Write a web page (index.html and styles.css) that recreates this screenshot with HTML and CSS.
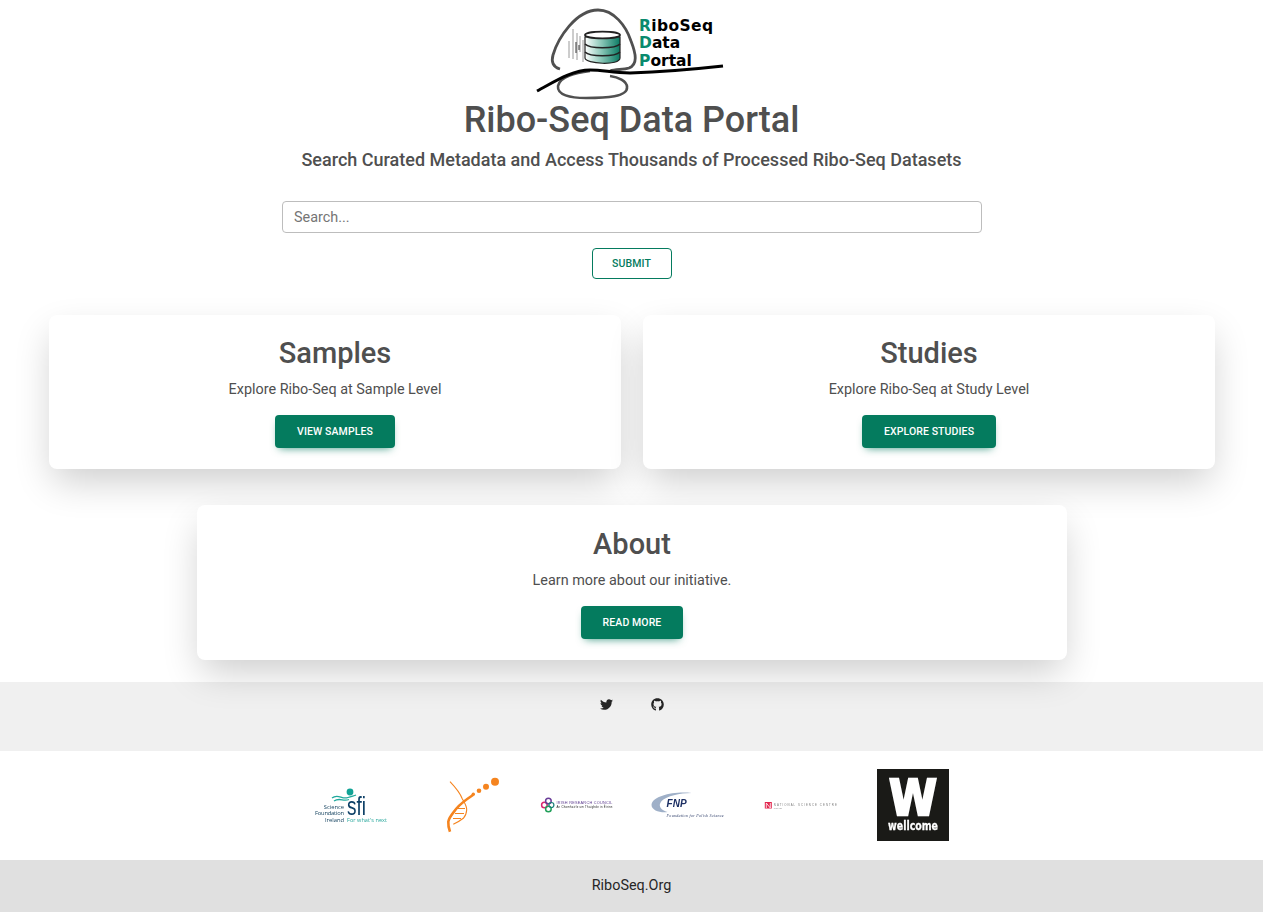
FILE: index.html
```html
<!DOCTYPE html>
<html lang="en">
<head>
<meta charset="utf-8">
<title>Ribo-Seq Data Portal</title>
<link rel="stylesheet" href="styles.css">
</head>
<body>
<header class="hero">
  <svg class="site-logo" width="220" height="100" viewBox="0 0 220 100" role="img" aria-label="RiboSeq Data Portal">
    <defs>
      <linearGradient id="cyl" x1="0" x2="1" y1="0" y2="0">
        <stop offset="0" stop-color="#ffffff"/>
        <stop offset="0.45" stop-color="#8fc9ba"/>
        <stop offset="1" stop-color="#0a7a63"/>
      </linearGradient>
    </defs>
    <path d="M40 69C33 67 31 62 33 55C38 38 56 10 78 10C94 10 106 26 111 41C116 54 118 64 109 68C103 70 96 69 90 71" fill="none" stroke="#505050" stroke-width="2.800"/>
    <path d="M70 71C56 73 40 76 38 86C37 95 50 98 66 98C86 98 108 97 107 87C107 81 98 77 90 76" fill="none" stroke="#505050" stroke-width="2.600"/>
    <path d="M17 91C34 82 52 70 70 70C84 70 92 73 110 73C140 72 176 69 203 66" fill="none" stroke="#000" stroke-width="3"/>
    <path d="M65 37V58C65 64 100 66 100 58V37Z" fill="url(#cyl)" stroke="#222" stroke-width="1.200"/>
    <ellipse cx="82.500" cy="35" rx="17.500" ry="3.400" fill="#fff" stroke="#222" stroke-width="1.800"/>
    <path d="M65 44C70 49 95 49 100 44M65 52C70 57 95 57 100 52" fill="none" stroke="#222" stroke-width="1.600"/>
    <path d="M53 29V59M57 33V60M60 36V52M49 41V58M63 40V62" fill="none" stroke="#9a9a9a" stroke-width="1"/>
    <path d="M56 42V53M59 45V50" fill="none" stroke="#333" stroke-width="1"/>
    <text class="lg-t" x="119" y="31" textLength="74"><tspan class="lg-c">R</tspan>iboSeq</text>
    <text class="lg-t" x="119" y="48"><tspan class="lg-c">D</tspan>ata</text>
    <text class="lg-t" x="119" y="66"><tspan class="lg-c">P</tspan>ortal</text>
  </svg>
  <h1 class="title">Ribo-Seq Data Portal</h1>
  <p class="subtitle">Search Curated Metadata and Access Thousands of Processed Ribo-Seq Datasets</p>
  <form class="search">
    <input class="search-input" type="text" placeholder="Search...">
    <button class="btn btn-outline" type="button">Submit</button>
  </form>
</header>

<main class="cards">
  <section class="card card-half">
    <h2 class="card-title">Samples</h2>
    <p class="card-text">Explore Ribo-Seq at Sample Level</p>
    <a class="btn btn-solid btn-samples" href="#">View Samples</a>
  </section>
  <section class="card card-half">
    <h2 class="card-title">Studies</h2>
    <p class="card-text">Explore Ribo-Seq at Study Level</p>
    <a class="btn btn-solid btn-studies" href="#">Explore Studies</a>
  </section>
  <section class="card card-wide">
    <h2 class="card-title">About</h2>
    <p class="card-text">Learn more about our initiative.</p>
    <a class="btn btn-solid btn-about" href="#">Read More</a>
  </section>
</main>

<section class="social">
  <a class="social-link" href="#" aria-label="Twitter">
    <svg width="13" height="13" viewBox="0 0 512 512"><path fill="currentColor" d="M459.37 151.716c.325 4.548.325 9.097.325 13.645 0 138.72-105.583 298.558-298.558 298.558-59.452 0-114.68-17.219-161.137-47.106 8.447.974 16.568 1.299 25.34 1.299 49.055 0 94.213-16.568 130.274-44.832-46.132-.975-84.792-31.188-98.112-72.772 6.498.974 12.995 1.624 19.818 1.624 9.421 0 18.843-1.3 27.614-3.573-48.081-9.747-84.143-51.98-84.143-102.985v-1.299c13.969 7.797 30.214 12.67 47.431 13.319-28.264-18.843-46.781-51.005-46.781-87.391 0-19.492 5.197-37.36 14.294-52.954 51.655 63.675 129.3 105.258 216.365 109.807-1.624-7.797-2.599-15.918-2.599-24.04 0-57.828 46.782-104.934 104.934-104.934 30.213 0 57.502 12.67 76.67 33.137 23.715-4.548 46.456-13.32 66.599-25.34-7.798 24.366-24.366 44.833-46.132 57.827 21.117-2.273 41.584-8.122 60.426-16.243-14.292 20.791-32.161 39.308-52.628 54.253z"/></svg>
  </a>
  <a class="social-link" href="#" aria-label="GitHub">
    <svg width="13" height="13" viewBox="0 0 496 512"><path fill="currentColor" d="M244.8 8C106.1 8 0 113.3 0 252c0 110.9 69.8 205.8 169.5 239.2 12.8 2.3 17.3-5.6 17.3-12.1 0-6.2-.3-40.4-.3-61.4 0 0-70 15-84.7-29.8 0 0-11.4-29.1-27.8-36.6 0 0-22.9-15.7 1.6-15.4 0 0 24.9 2 38.6 25.8 21.9 38.6 58.6 27.5 72.9 20.9 2.3-16 8.8-27.1 16-33.7-55.9-6.2-112.3-14.3-112.3-110.5 0-27.5 7.6-41.3 23.6-58.9-2.6-6.5-11.1-33.3 2.6-67.9 20.9-6.5 69 27 69 27 20-5.6 41.5-8.5 62.8-8.5s42.8 2.9 62.8 8.5c0 0 48.1-33.6 69-27 13.7 34.7 5.2 61.4 2.6 67.9 16 17.7 25.8 31.5 25.8 58.9 0 96.5-58.9 104.2-114.8 110.5 9.2 7.9 17 22.9 17 46.4 0 33.7-.3 75.4-.3 83.6 0 6.5 4.6 14.4 17.3 12.1C428.2 457.8 496 362.9 496 252 496 113.3 383.5 8 244.8 8z"/></svg>
  </a>
</section>

<section class="partners">
  <svg class="partner" viewBox="-1 0 72 72" width="72" height="72" role="img" aria-label="Science Foundation Ireland">
    <circle cx="36" cy="23" r="3.400" fill="#12a396"/>
    <path d="M18 29C24 24 28 31 34 28.500C38 27 40 27 42 26M20 32C26 28 29 33 35 30.500" fill="none" stroke="#1fa89c" stroke-width="1.300"/>
    <text class="sfi-big" x="33" y="46" textLength="19" lengthAdjust="spacingAndGlyphs">sfi</text>
    <text class="sfi-small" x="30" y="40" text-anchor="end">Science</text>
    <text class="sfi-small" x="30" y="46" text-anchor="end" textLength="29">Foundation</text>
    <text class="sfi-small" x="30" y="52.500" text-anchor="end">Ireland</text>
    <text class="sfi-next" x="33" y="52.500" textLength="40">For what's next</text>
  </svg>
  <svg class="partner" viewBox="0 0 72 72" width="72" height="72" role="img" aria-label="Ribosome profiling">
    <circle cx="69" cy="12.700" r="4" fill="#f5841f"/>
    <circle cx="60" cy="17.700" r="3" fill="#f5841f"/>
    <circle cx="53" cy="21.700" r="2.300" fill="#f5841f"/>
    <circle cx="47.300" cy="25.300" r="1.700" fill="#f5841f"/>
    <path d="M24 12.700C29 18 34 24 36 29.300C38 33 41 37 40.700 41C40.500 45 38.500 48 37.300 49.300C34 52 30 54 27.300 55.300" fill="none" stroke="#f5841f" stroke-width="1.100"/>
    <path d="M47 26C41 30 35 34 30.700 39.300C27 44 23 48 22.300 52.700C22 57 23 60 24 62.700" fill="none" stroke="#f5841f" stroke-width="2.600"/>
    <path d="M31 39.500H39M29 44.500H38M27 49.500H35" stroke="#f5841f" stroke-width="1"/>
  </svg>
  <svg class="partner" viewBox="-1.400 0 72 72" width="72" height="72" role="img" aria-label="Irish Research Council">
    <circle cx="4" cy="36" r="2.800" fill="none" stroke="#d9266e" stroke-width="1.500"/>
    <circle cx="8" cy="32" r="2.800" fill="none" stroke="#6a3d98" stroke-width="1.500"/>
    <circle cx="8" cy="40" r="2.800" fill="none" stroke="#22a05a" stroke-width="1.500"/>
    <circle cx="11" cy="36" r="2.500" fill="none" stroke="#1b7f7a" stroke-width="1.200"/>
    <text class="irc-a" x="16" y="35" textLength="56">IRISH RESEARCH COUNCIL</text>
    <text class="irc-b" x="16" y="39" textLength="56">An Chomhairle um Thaighde in Éirinn</text>
  </svg>
  <svg class="partner" viewBox="-0.600 0 72 72" width="72" height="72" role="img" aria-label="Foundation for Polish Science">
    <path d="M40 24C22 22 2 27 0 35C-1 41 8 44 16 43C9 41 6 37 10 32C15 27 28 24 40 24Z" fill="#9fb0c8"/>
    <text class="fnp-big" x="15" y="37.500">FNP</text>
    <text class="fnp-small" x="15" y="48" textLength="57">Foundation for Polish Science</text>
  </svg>
  <svg class="partner" viewBox="-0.800 0 72 72" width="72" height="72" role="img" aria-label="National Science Centre Poland">
    <rect x="0" y="33" width="7" height="6.500" fill="#e2254d"/>
    <path d="M1.500 39V34L5.500 39V34" fill="none" stroke="#fff" stroke-width="0.800"/>
    <text class="ncn-a" x="9" y="36.500" textLength="63">NATIONAL SCIENCE CENTRE</text>
    <text class="ncn-b" x="9" y="39.500">POLAND</text>
  </svg>
  <svg class="partner" viewBox="0 0 72 72" width="72" height="72" role="img" aria-label="Wellcome">
    <rect width="72" height="72" fill="#1a1a17"/>
    <text class="wc-w" x="12" y="46" textLength="48" lengthAdjust="spacingAndGlyphs">W</text>
    <text class="wc-t" x="11" y="61" textLength="50" lengthAdjust="spacingAndGlyphs">wellcome</text>
  </svg>
</section>

<footer class="copyright">RiboSeq.Org</footer>
</body>
</html>
```

FILE: styles.css
```css
* { box-sizing: border-box; }

html, body { margin: 0; padding: 0; }

body {
  background: #fff;
  color: #4f4f4f;
  font-family: Roboto, "Liberation Sans", sans-serif;
  font-size: 16px;
  line-height: 1.6;
}

.hero {
  display: flex;
  flex-direction: column;
  align-items: center;
}

.site-logo { display: block; margin-right: 3px; }

.lg-t {
  font-family: "DejaVu Sans", sans-serif;
  font-weight: 700;
  font-size: 15.500px;
  fill: #000;
}
.lg-c { fill: #0a8a6e; }

.title {
  margin: 0;
  font-size: 36px;
  font-weight: 500;
  line-height: 40px;
}

.subtitle {
  margin: 7px 0 0;
  font-size: 18px;
  font-weight: 500;
  line-height: 25px;
}

.search {
  width: 700px;
  margin-top: 29px;
  display: flex;
  flex-direction: column;
  align-items: center;
  gap: 15px;
}

.search-input {
  width: 100%;
  height: 32px;
  padding: 0 11.500px;
  border: 1px solid #bdbdbd;
  border-radius: 4px;
  font: 400 14.400px Roboto, sans-serif;
  color: #4f4f4f;
  outline: none;
}
.search-input::placeholder { color: #757575; opacity: 1; }

.btn {
  display: flex;
  align-items: center;
  justify-content: center;
  padding: 2px 0 0;
  border-radius: 4px;
  font-family: Roboto, sans-serif;
  font-size: 10.500px;
  font-weight: 500;
  letter-spacing: 0.1px;
  text-transform: uppercase;
  text-decoration: none;
  line-height: 1;
}

.btn-outline {
  width: 80px;
  height: 31px;
  background: #fff;
  border: 1px solid #047b5e;
  color: #047b5e;
}

.btn-solid {
  height: 33px;
  background: #047b5e;
  color: #fff;
  box-shadow: 0 4px 9px -4px rgba(4, 123, 94, 0.8);
}
.btn-samples { width: 120px; }
.btn-studies { width: 134px; }
.btn-about { width: 102px; }

.cards {
  display: flex;
  flex-wrap: wrap;
  justify-content: center;
  gap: 36px 22px;
  margin-top: 36px;
  padding: 0 48px 0 49px;
}

.card {
  position: relative;
  display: flex;
  flex-direction: column;
  align-items: center;
  padding-top: 18px;
  background: #fff;
  border-radius: 8px;
  box-shadow: 0 16px 38px -4px rgba(0, 0, 0, 0.2);
}
.card-half { width: 572px; height: 154px; }
.card-wide { width: 870px; height: 155px; padding-top: 19px; }

.card-title {
  margin: 0;
  font-size: 29px;
  font-weight: 500;
  line-height: 40px;
}

.card-text {
  margin: 5px 0 0;
  font-size: 14.400px;
  line-height: 23px;
}

.card .btn { margin-top: 14px; }

.social {
  margin-top: 22px;
  height: 69px;
  background: #f0f0f0;
  display: flex;
  justify-content: center;
  gap: 38px;
  padding-top: 16px;
}

.social-link {
  display: block;
  height: 13px;
  color: #262626;
  line-height: 0;
}

.partners {
  display: flex;
  justify-content: center;
  align-items: flex-start;
  gap: 40.800px;
  height: 109px;
  padding: 18px 1px 0 0;
}

.partner {
  display: block;
  flex: none;
  overflow: visible;
  filter: blur(0.3px);
}

.sfi-big { font: 400 26px "Liberation Sans", sans-serif; fill: #0c3f66; }
.sfi-small { font: 400 5.800px "Open Sans", sans-serif; fill: #14425f; }
.sfi-next { font: 400 5.500px "Open Sans", sans-serif; fill: #28a79c; }
.irc-a { font: 400 3.800px "Liberation Sans", sans-serif; fill: #5c3a8f; }
.irc-b { font: 400 2.800px "Liberation Sans", sans-serif; fill: #222; }
.fnp-big { font: italic 700 10px "Liberation Sans", sans-serif; fill: #1c2f63; }
.fnp-small { font: italic 400 4px "Liberation Serif", serif; fill: #2a3a66; }
.ncn-a { font: 400 2.800px "Liberation Sans", sans-serif; fill: #777; }
.ncn-b { font: 400 2px "Liberation Sans", sans-serif; fill: #888; }
.wc-w { font: 700 50px "DejaVu Sans", sans-serif; fill: #fff; stroke: #fff; stroke-width: 2.500px; }
.wc-t { font: 700 13px "DejaVu Sans", sans-serif; fill: #fff; stroke: #fff; stroke-width: 0.300px; }

.copyright {
  height: 52px;
  background: #e0e0e0;
  color: #262626;
  font-size: 14.400px;
  display: flex;
  align-items: center;
  justify-content: center;
}
```
